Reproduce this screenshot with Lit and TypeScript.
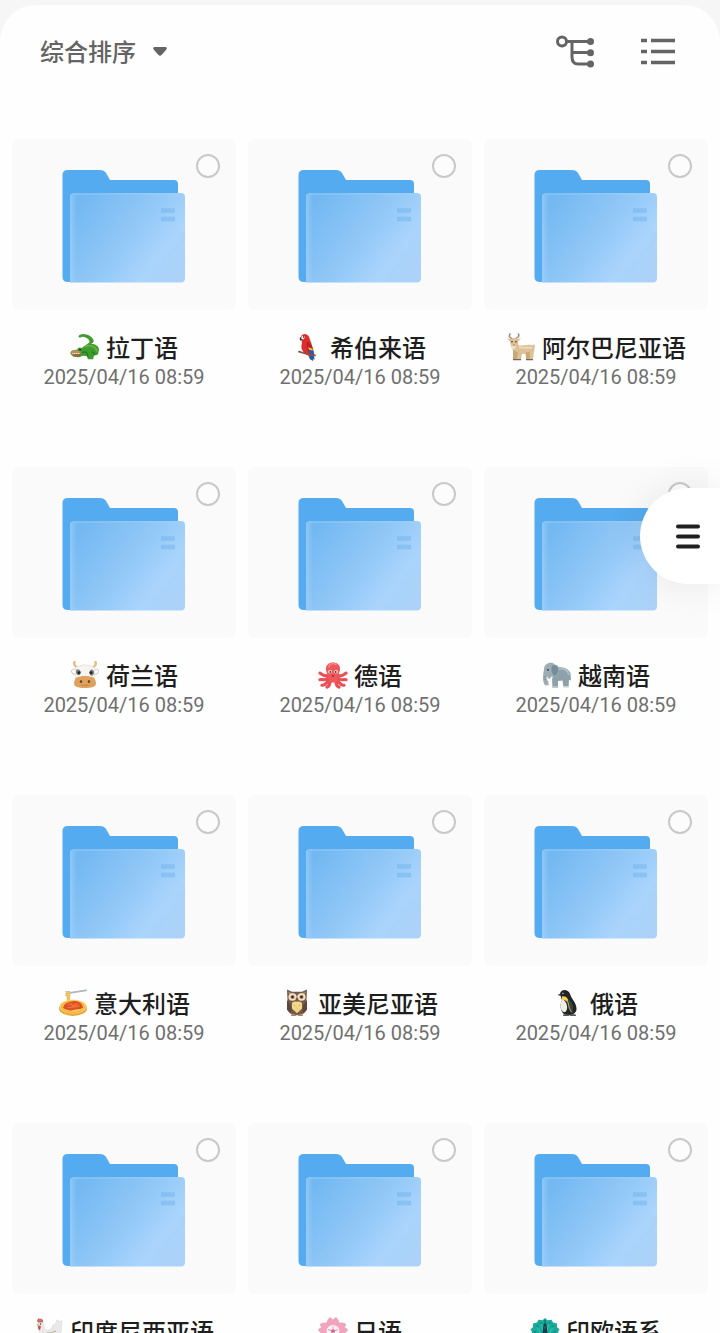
import { LitElement, html, css, svg, SVGTemplateResult } from "lit";
import { customElement, property } from "lit/decorators.js";

const glyphs: Record<string, SVGTemplateResult> = {
  crocodile: svg`
    <path d="M8.500 4C9 0 17 0.500 21 4C25 7.500 24.500 11 20 12C23 11 29 13 29 18L28 23L24 24.500L23 28H18L17 25L13 24.500L9 26C5 26 1.500 25 0.500 22C0.500 19 3 18 7 18C8 15 10 15 12 16C14 14 17 12 19 10.500C21 8 17 4.500 12.500 4C10.500 4 10.500 6 8.500 4Z" fill="#3f9c2f"/>
    <path d="M0.500 20.500C3 17 7 18 11 20L10 23L6 25L2 24Z" fill="#b98f5e"/>
    <path d="M1.500 22L5 22.500L10 22L11 24L7 25.500L3 25Z" fill="#95613e"/>
    <path d="M2 22.200L10 22" stroke="#f4ead5" stroke-width="1" stroke-dasharray="1.500 0.500"/>
    <path d="M15 15C20 12 26 14 27 20" fill="none" stroke="#66b83b" stroke-width="1.800"/>
    <path d="M12 21C16 19 18 22 18 26M22 20L25 23" fill="none" stroke="#247b20" stroke-width="1.400"/>
    <circle cx="10" cy="18" r="1" fill="#2a2f1a"/>`,
  parrot: svg`
    <path d="M13 21L16 28L19 30L20 21Z" fill="#2d5c9d"/>
    <path d="M7 4C8 0 13 0 15 4C16 8 19 13 19 22L16 25C9 22 6 17 8 11Z" fill="#dc2f2d"/>
    <path d="M13 9C17 11 20 16 19.500 23L17 24C14 20 12 15 13 9Z" fill="#b82029"/>
    <path d="M14 15L18.500 17L19 20L16 20Z" fill="#f0bd35"/>
    <path d="M14.500 18L19.500 19L20.500 29L17 26Z" fill="#255aa7"/>
    <path d="M7 4C5 5 5.500 7.500 7 8.500L8.500 6Z" fill="#3c3738"/>
    <path d="M8 3L11 4L9.500 7L7 6Z" fill="#fff2e7"/>
    <circle cx="9.500" cy="4.300" r="0.700" fill="#222"/>
    <path d="M5 20L11 22L21 24" fill="none" stroke="#885247" stroke-width="1.800" stroke-linecap="round"/>`,
  goat: svg`
    <path d="M6 6C3 5 3 3 4 1M10 5.500C13 5 13 3 12.500 1" fill="none" stroke="#a58d72" stroke-width="1.600" stroke-linecap="round"/>
    <path d="M1 6L5 6.500L8 5L11 6.500L15 6L12 9L12.500 13C17 14 22 12 26 13L28 12L29 14L28 20L27 28.500H23L22.500 22L16 22.500L15 28.500H11L9.500 22L6 17L5 14L4 9Z" fill="#dfc199"/>
    <path d="M7 18L7 28.500H11L12 21M19.500 21L20 28.500H23.500L24 20Z" fill="#c9a877"/>
    <path d="M5 13L8 14L10 13L9 17L7 18Z" fill="#f0e1c8"/>
    <path d="M13 15C17 17 22 15 26 16" fill="none" stroke="#eddabb" stroke-width="2"/>
    <path d="M7 28.500H15M20 28.500H27" stroke="#776655" stroke-width="1.400"/>
    <circle cx="6" cy="9.500" r="0.800" fill="#3b3029"/><circle cx="10" cy="9.500" r="0.800" fill="#3b3029"/>
    <path d="M7 13H9" stroke="#ad7d6e" stroke-width="1"/>`,
  cow: svg`
    <path d="M6 6C4 5 4 3 4.500 1M24 6C26 5 26 3 25.500 1" fill="none" stroke="#e5bd83" stroke-width="2.400" stroke-linecap="round"/>
    <path d="M6 10C2 7 0 11 3 14L7 14ZM24 10C28 7 30 11 27 14L23 14Z" fill="#fff" stroke="#bdb9b5" stroke-width="0.800"/>
    <path d="M5 8C8 3 22 3 25 8L24 22H6Z" fill="#f6f4f2" stroke="#d6d1cd" stroke-width="0.500"/>
    <path d="M6.500 9C10 8 12 12 9.500 15C7 16 5 12 6.500 9ZM21 9C25 9 25 14 22 16C19 15 19 11 21 9Z" fill="#85807d"/>
    <circle cx="9" cy="12.500" r="1.600" fill="#252525"/><circle cx="21" cy="12.500" r="1.600" fill="#252525"/>
    <path d="M6 18C11 15.500 19 15.500 24 18C29 27 24 29 15 29C6 29 1 27 6 18Z" fill="#dfa25e"/>
    <ellipse cx="11" cy="22" rx="1.200" ry="1.700" fill="#6b452d"/><ellipse cx="19" cy="22" rx="1.200" ry="1.700" fill="#6b452d"/>
    <path d="M11 26H19" stroke="#b77a3d" stroke-width="0.800"/>`,
  octopus: svg`
    <path d="M10 15C6 18 4 14 2 13M11 18C7 22 3 19 2 20M12 20C8 22 8 27 4 26M13 20C11 23 13 26 9 28M20 15C24 18 26 14 28 13M19 18C23 22 27 19 28 20M18 20C22 22 22 27 26 26M17 20C19 23 17 26 21 28" fill="none" stroke="#ea4f55" stroke-width="3.200" stroke-linecap="round"/>
    <path d="M8 9C7 -1 23 -1 22 9C22 12 20 13 20 17L18 23H12L10 17C10 13 8 12 8 9Z" fill="#f0585c"/>
    <path d="M11 6C12 2 17 2 18 4" fill="none" stroke="#f8898b" stroke-width="1.700" stroke-linecap="round"/>
    <circle cx="12" cy="11.500" r="1.900" fill="#fce5df"/><circle cx="18" cy="11.500" r="1.900" fill="#fce5df"/>
    <circle cx="12.300" cy="11.700" r="0.900" fill="#47242b"/><circle cx="17.700" cy="11.700" r="0.900" fill="#47242b"/>
    <ellipse cx="15" cy="16" rx="1.500" ry="1" fill="#bb3039"/>`,
  elephant: svg`
    <path d="M13 8C18 5 26 7 28.500 13L29 21L27 20L26.500 28H21.500L20.500 21L16 21.500L16 29H10.500L10 19Z" fill="#8da1aa"/>
    <path d="M2 9C2 2 10 0 13 4C18 3 19 13 14 17L9 17C8 20 5 22 7 26L3 26C0 21 1 15 2 9Z" fill="#9cadb5"/>
    <path d="M10 5C16 2 19 12 13 16C9 14 9 8 10 5Z" fill="#778d98"/>
    <path d="M5 16C6 20 9 20 11 17L9 22C6 23 4 20 5 16Z" fill="#fff8ed"/>
    <path d="M17 9C22 7 26 10 27 15" fill="none" stroke="#b4c2c8" stroke-width="1.600"/>
    <path d="M10.500 28H16M21.500 27.500H26.500" stroke="#d3d6d6" stroke-width="1.500"/>
    <circle cx="6" cy="9.500" r="0.900" fill="#263238"/>
    <path d="M2 17H4M2 20H4" stroke="#748a94" stroke-width="0.800"/>`,
  spaghetti: svg`
    <path d="M10 4.500L28 1.500" stroke="#acb8bf" stroke-width="2" stroke-linecap="round"/>
    <path d="M7 3L12 2.500M7 5L12 4.500M7 7L12 6" stroke="#b5bdc1" stroke-width="1"/>
    <path d="M9 3L10 16M11 3L11.500 17M8 7L12.500 6" stroke="#edc35c" stroke-width="1.900"/>
    <ellipse cx="15" cy="21" rx="14" ry="7.800" fill="#e6a73c"/>
    <ellipse cx="15" cy="19" rx="13.500" ry="7.500" fill="#ffcf5f"/>
    <ellipse cx="15" cy="19" rx="11.500" ry="6" fill="none" stroke="#e9a536" stroke-width="1"/>
    <path d="M5 20C6 14 12 14 15 13C20 12 25 16 25 20C21 23 17 21 14 23C10 23 7 22 5 20Z" fill="#dd4f27"/>
    <path d="M10 17L13 16L15 18L19 16M10 20L17 19L21 18" fill="none" stroke="#f0743a" stroke-width="1.500" stroke-linecap="round"/>`,
  owl: svg`
    <path d="M5 0.500L10 3H20L25 0.500L24.500 12L25 22C23 26 20 28 15 28C10 28 7 26 5 22L5.500 12Z" fill="#745c4c"/>
    <path d="M6 3L12 5L15 10L18 5L24 3L22 7H8Z" fill="#a48a71"/>
    <path d="M10 15C12 13 18 13 20 15L20 21L15 26L10 21Z" fill="#f3d789"/>
    <path d="M5 12C9 16 10 21 9 26L5 22ZM25 12C21 16 20 21 21 26L25 22Z" fill="#5d473d"/>
    <circle cx="10.500" cy="8.500" r="4" fill="#f1e3cd"/><circle cx="19.500" cy="8.500" r="4" fill="#f1e3cd"/>
    <circle cx="10.500" cy="8.500" r="2" fill="#a45e31"/><circle cx="19.500" cy="8.500" r="2" fill="#a45e31"/>
    <circle cx="10.500" cy="8.500" r="1.100" fill="#252525"/><circle cx="19.500" cy="8.500" r="1.100" fill="#252525"/>
    <path d="M13.500 10H16.500L15 14Z" fill="#765a36"/>
    <path d="M12 17L13 18M17 17L18 18M14.500 20L15.500 21" stroke="#c89b57" stroke-width="1"/>
    <path d="M10 28H13M17 28H20" stroke="#a6865f" stroke-width="2" stroke-linecap="round"/>`,
  penguin: svg`
    <path d="M6 5C7 -0.500 14 0 16 5C17 10 23 15 22.500 22C22 26 18 29 13 28C7 27 5 18 8 12Z" fill="#202425"/>
    <path d="M8.500 11C13 13 15 22 11 25C5 24 6 15 8.500 11Z" fill="#eeeee7"/>
    <path d="M8 8C12 7 15 10 15 17C13 13 11 11 8 12Z" fill="#f5cf4f"/>
    <path d="M14 11C19 14 20 20 18 26C14 23 13 17 14 11Z" fill="#3c4344"/>
    <path d="M14 14C15 20 16 23 18 25" fill="none" stroke="#d7b64e" stroke-width="1"/>
    <path d="M7 4.500L3.500 6.500L7 7.500Z" fill="#423b35"/>
    <circle cx="9" cy="4.600" r="0.700" fill="#fff"/>
    <path d="M10 28H14M17 28H21" stroke="#555b5c" stroke-width="2" stroke-linecap="round"/>`,
  rooster: svg`
    <path d="M4 6C7 3 11 6 10 12C14 16 18 14 19 8L21 9L23 3L26 5L28 4L27 16C25 22 20 25 14 24C7 23 4 18 5 12Z" fill="#e9e9e9" stroke="#d2d0d0" stroke-width="0.500"/>
    <path d="M4 6C2 3 4 3 4.500 1C6 3 8 0.500 8.500 3C10 4 9 6 8 6Z" fill="#c6716a"/>
    <path d="M5 9C3 9 4 14 6 14L7 10Z" fill="#c5524f"/>
    <path d="M4 7L2 9L5 9Z" fill="#dba652"/>
    <circle cx="6.500" cy="7.500" r="0.700" fill="#333"/>
    <path d="M13 17C16 18 19 16 22 15M13 24V28M17 24V28" fill="none" stroke="#bca782" stroke-width="1"/>`,
  blossom: svg`
    <g fill="#f0a4be" stroke="#e594b0" stroke-width="0.500">
      <path d="M15 15C7 10 8 4 12 0.500L15 3L18 0.500C22 4 23 10 15 15Z"/>
      <path d="M15 15C7 10 8 4 12 0.500L15 3L18 0.500C22 4 23 10 15 15Z" transform="rotate(72 15 15)"/>
      <path d="M15 15C7 10 8 4 12 0.500L15 3L18 0.500C22 4 23 10 15 15Z" transform="rotate(144 15 15)"/>
      <path d="M15 15C7 10 8 4 12 0.500L15 3L18 0.500C22 4 23 10 15 15Z" transform="rotate(216 15 15)"/>
      <path d="M15 15C7 10 8 4 12 0.500L15 3L18 0.500C22 4 23 10 15 15Z" transform="rotate(288 15 15)"/>
    </g>
    <circle cx="15" cy="15" r="6.500" fill="#fdf0f4"/><circle cx="15" cy="15" r="2" fill="#d56a92"/>
    <path d="M15 15V10M15 15L20 13.500M15 15L18 19.500M15 15L12 19.500M15 15L10 13.500" stroke="#d56a92" stroke-width="0.700"/>`,
  peacock: svg`
    <path d="M15 27L4 24L4 21L0.500 19L2 16L0.500 13L3 11L3 7L7 6L8.500 3L12.500 3.500L15 1L17.500 3.500L21.500 3L23 6L27 7L27 11L29.500 13L28 16L29.500 19L26 21L26 24Z" fill="#18ab9b"/>
    <path d="M15 25L5 17M15 25L7 11M15 25L11 6M15 25L19 6M15 25L23 11M15 25L25 17" stroke="#2fc0a9" stroke-width="1.300"/>
    <g fill="#1d7d80"><circle cx="5" cy="16" r="1"/><circle cx="7.500" cy="10" r="1"/><circle cx="11" cy="6.500" r="1"/><circle cx="19" cy="6.500" r="1"/><circle cx="22.500" cy="10" r="1"/><circle cx="25" cy="16" r="1"/></g>
    <path d="M13.500 9C13 6 17 6 16.500 9L18 20C20 29 10 29 12 20Z" fill="#173f4b"/>
    <path d="M15 7V3M15 10L14 12H16Z" fill="#e4ba63" stroke="#173f4b" stroke-width="0.700"/>`,
};

@customElement("folder-card")
class FolderCard extends LitElement {
  @property() name = "";
  @property() glyph = "";
  @property() modified = "";

  static styles = css`
    :host { display: block; min-width: 0; }
    .thumb {
      position: relative;
      display: flex;
      justify-content: center;
      padding: 31px 0 26px;
      border-radius: 6px;
      background: #fafafa;
    }
    .folder { display: block; width: 124px; height: 114px; }
    .pick {
      position: absolute;
      top: 15px;
      right: 16px;
      box-sizing: border-box;
      width: 24px;
      height: 24px;
      margin: 0;
      appearance: none;
      border: 2px solid #c9c9c9;
      border-radius: 50%;
      background: #fcfcfc;
    }
    .pick:checked { background: #50a9ef; border-color: #50a9ef; }
    .title {
      display: flex;
      align-items: center;
      justify-content: center;
      gap: 6px;
      margin-top: 22px;
      font-size: 24px;
      font-weight: 500;
      line-height: 30px;
      color: #1e1e1e;
      white-space: nowrap;
    }
    .glyph { flex: none; width: 30px; height: 28px; }
    .date {
      display: block;
      text-align: center;
      font-family: Roboto, sans-serif;
      font-size: 20px;
      line-height: 30px;
      color: #707070;
    }
  `;

  render() {
    return html`
      <div class="thumb">
        <svg class="folder" viewBox="0 0 124 114" aria-hidden="true">
          <defs>
            <linearGradient id="front" x1="0" y1="0.2" x2="1" y2="0.8">
              <stop offset="0" stop-color="#72b8f1" />
              <stop offset="0.500" stop-color="#92c8f7" />
              <stop offset="0.780" stop-color="#a9d4fc" />
              <stop offset="1" stop-color="#acd2f9" />
            </linearGradient>
            <linearGradient id="edge" x1="0" y1="0" x2="1" y2="0">
              <stop offset="0" stop-color="#a5d3f8" stop-opacity="0.600" />
              <stop offset="1" stop-color="#a5d3f8" stop-opacity="0" />
            </linearGradient>
          </defs>
          <path d="M0.500 5Q0.500 0 6 0H38Q42 0 44 3L48 10H112Q116 10 116 14V60L60 112H6Q0.500 112 0.500 107Z" fill="#54abef" />
          <path d="M8 27Q8 23 12 23H119Q123 23 123 27V108Q123 112.500 119 112.500H8Z" fill="url(#front)" />
          <path d="M8 27Q8 23 12 23H15V112.500H8Z" fill="url(#edge)" />
          <path d="M12 24H119" stroke="#a8d2f7" stroke-width="1.500" opacity="0.400" />
          <path d="M99 40.500H113M99 49H113" stroke="#72b4ee" stroke-width="4.500" opacity="0.500" />
        </svg>
        <input class="pick" type="checkbox" aria-label=${this.name} />
      </div>
      <div class="title">
        <svg class="glyph" viewBox="0 0 30 30" preserveAspectRatio="none" aria-hidden="true">${glyphs[this.glyph]}</svg>
        <span>${this.name}</span>
      </div>
      <time class="date">${this.modified}</time>
    `;
  }
}

@customElement("app-root")
class AppRoot extends LitElement {
  private folders = [
    ["crocodile", "拉丁语"],
    ["parrot", "希伯来语"],
    ["goat", "阿尔巴尼亚语"],
    ["cow", "荷兰语"],
    ["octopus", "德语"],
    ["elephant", "越南语"],
    ["spaghetti", "意大利语"],
    ["owl", "亚美尼亚语"],
    ["penguin", "俄语"],
    ["rooster", "印度尼西亚语"],
    ["blossom", "日语"],
    ["peacock", "印欧语系"],
  ];

  static styles = css`
    :host {
      display: block;
      box-sizing: border-box;
      height: 100vh;
      padding-top: 5px;
      overflow: hidden;
      background: #f6f6f6;
      font-family: "Noto Sans CJK SC", sans-serif;
    }
    .sheet {
      height: 100%;
      overflow-y: auto;
      scrollbar-width: none;
      border-radius: 36px 36px 0 0;
      background: #fefefe;
    }
    .bar {
      display: flex;
      align-items: center;
      gap: 44px;
      height: 92px;
      padding: 0 40px;
    }
    button {
      padding: 0;
      border: 0;
      background: none;
      font: inherit;
      color: #646464;
      cursor: pointer;
    }
    .sort {
      display: flex;
      align-items: center;
      gap: 16px;
      margin-right: auto;
      font-size: 24px;
      font-weight: 500;
      line-height: 32px;
    }
    .caret { width: 16px; height: 12px; }
    .tool { width: 40px; height: 40px; }
    .tool svg { display: block; width: 100%; height: 100%; }
    .grid {
      display: grid;
      grid-template-columns: repeat(3, minmax(0, 1fr));
      gap: 75px 12px;
      padding: 42px 12px;
    }
    .menu {
      position: fixed;
      top: 488px;
      right: 0;
      display: flex;
      align-items: center;
      justify-content: flex-end;
      width: 80px;
      height: 96px;
      padding-right: 18px;
      border-radius: 48px 0 0 48px;
      background: #fff;
      box-shadow: 0 0 40px rgba(0, 0, 0, 0.08);
      color: #202020;
    }
    .menu svg { width: 28px; height: 28px; }
  `;

  render() {
    return html`
      <main class="sheet">
        <header class="bar">
          <button class="sort">
            综合排序
            <svg class="caret" viewBox="0 0 16 12" aria-hidden="true">
              <path d="M3 2H13Q16 2 14 5L9.500 10Q8 11.500 6.500 10L2 5Q0 2 3 2Z" fill="currentColor" />
            </svg>
          </button>
          <button class="tool" aria-label="目录树">
            <svg viewBox="0 0 40 40" fill="none" stroke="currentColor" stroke-width="3">
              <circle cx="6" cy="10.500" r="4.500" />
              <path d="M10 10.500H35M16 10.500V26Q16 33 22 33H35M16 21.500H35" />
              <g fill="currentColor" stroke="none">
                <circle cx="34.500" cy="10.500" r="3.500" />
                <circle cx="34.500" cy="21.700" r="3.500" />
                <circle cx="34.500" cy="33" r="3.500" />
              </g>
            </svg>
          </button>
          <button class="tool" aria-label="列表视图">
            <svg viewBox="0 0 40 40" fill="none" stroke="currentColor" stroke-width="3.500">
              <path d="M1 9.500H7M11 9.500H35M1 20.500H7M11 20.500H35M1 31.500H7M11 31.500H35" />
            </svg>
          </button>
        </header>
        <section class="grid">
          ${this.folders.map(
            ([glyph, name]) => html`<folder-card .glyph=${glyph} .name=${name} .modified=${"2025/04/16 08:59"}></folder-card>`
          )}
        </section>
      </main>
      <button class="menu" aria-label="菜单">
        <svg viewBox="0 0 28 28" fill="none" stroke="currentColor" stroke-width="4" stroke-linecap="round">
          <path d="M4 4.500H24M4 14.500H24M4 24.500H24" />
        </svg>
      </button>
    `;
  }
}
